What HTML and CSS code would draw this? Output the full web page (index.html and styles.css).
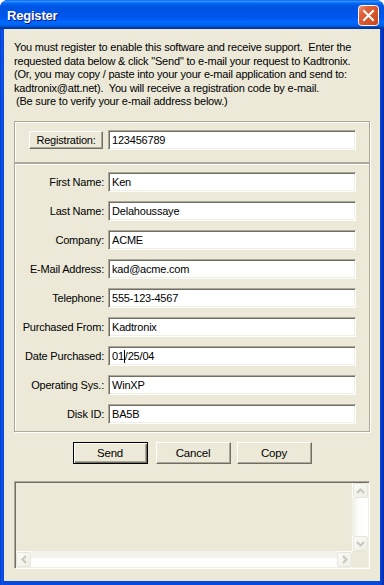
FILE: index.html
```html
<!DOCTYPE html>
<html lang="en">
<head>
  <meta charset="UTF-8" />
  <meta name="viewport" content="width=device-width, initial-scale=1.0" />
  <title>Register</title>
  <link rel="stylesheet" href="styles.css">
</head>
<body>
  <div class="window">
    <div class="titlebar">
      <span class="title">Register</span>
      <button class="close" aria-label="Close">
        <svg width="21" height="21" viewBox="0 0 21 21">
          <defs>
            <linearGradient id="closeBg" x1="0" y1="0" x2="1" y2="1">
              <stop offset="0" stop-color="#f0a58c"/>
              <stop offset="0.25" stop-color="#e2643c"/>
              <stop offset="1" stop-color="#c6441c"/>
            </linearGradient>
          </defs>
          <rect x="0.5" y="0.5" width="20" height="20" rx="3" fill="url(#closeBg)" stroke="#fff"/>
          <path d="M6 6 L15 15 M15 6 L6 15" stroke="#fff" stroke-width="2" stroke-linecap="square"/>
        </svg>
      </button>
    </div>

    <div class="client">
      <p class="intro">You must register to enable this software and receive support.&nbsp; Enter the<br>requested data below &amp; click "Send" to e-mail your request to Kadtronix.<br>(Or, you may copy / paste into your your e-mail application and send to:<br>kadtronix@att.net).&nbsp; You will receive a registration code by e-mail.</p>
      <p class="note">(Be sure to verify your e-mail address below.)</p>

      <!-- registration code -->
      <div class="group group-reg">
        <button class="btn btn-reg">Registration:</button>
        <input class="field" type="text" value="123456789">
      </div>

      <!-- user data -->
      <div class="group group-form">
        <label>First Name:</label><input class="field" type="text" value="Ken">
        <label>Last Name:</label><input class="field" type="text" value="Delahoussaye">
        <label>Company:</label><input class="field" type="text" value="ACME">
        <label>E-Mail Address:</label><input class="field" type="text" value="kad@acme.com">
        <label>Telephone:</label><input class="field" type="text" value="555-123-4567">
        <label>Purchased From:</label><input class="field" type="text" value="Kadtronix">
        <label>Date Purchased:</label><div class="field field-caret">01<span class="caret"></span>/25/04</div>
        <label>Operating Sys.:</label><input class="field" type="text" value="WinXP">
        <label>Disk ID:</label><input class="field" type="text" value="BA5B">
      </div>

      <div class="actions">
        <button class="btn btn-default">Send</button>
        <button class="btn btn-cancel">Cancel</button>
        <button class="btn">Copy</button>
      </div>

      <!-- output box -->
      <div class="log">
        <div class="log-body"></div>
        <div class="vscroll">
          <div class="sb-btn">
            <svg width="9" height="6" viewBox="0 0 9 6"><path d="M1 5 L4.5 1.5 L8 5" fill="none" stroke="#c9c7ba" stroke-width="2"/></svg>
          </div>
          <div class="sb-track sb-track-v"></div>
          <div class="sb-btn">
            <svg width="9" height="6" viewBox="0 0 9 6"><path d="M1 1 L4.5 4.5 L8 1" fill="none" stroke="#c9c7ba" stroke-width="2"/></svg>
          </div>
        </div>
        <div class="hscroll">
          <div class="sb-btn">
            <svg width="6" height="9" viewBox="0 0 6 9"><path d="M5 1 L1.5 4.5 L5 8" fill="none" stroke="#c9c7ba" stroke-width="2"/></svg>
          </div>
          <div class="sb-track sb-track-h"></div>
          <div class="sb-btn">
            <svg width="6" height="9" viewBox="0 0 6 9"><path d="M1 1 L4.5 4.5 L1 8" fill="none" stroke="#c9c7ba" stroke-width="2"/></svg>
          </div>
        </div>
        <div class="corner"></div>
      </div>
    </div>
  </div>
</body>
</html>
```

FILE: styles.css
```css
body {
  margin: 0;
  background: #fff;
  font-family: "Liberation Sans", Arial, sans-serif;
}

.window {
  width: 384px;
  height: 585px;
  display: flex;
  flex-direction: column;
  border-radius: 8px 8px 0 0;
  overflow: hidden;
  background: linear-gradient(to right, #0a3bcf 0, #0855e8 2px, #0749dc 4px, #0749dc 380px, #0636c4 382px, #0a2aa8 384px);
}

/* barra de titulo estilo XP */
.titlebar {
  height: 29px;
  flex-shrink: 0;
  display: flex;
  align-items: center;
  justify-content: space-between;
  padding: 0 5px 0 7px;
  box-sizing: border-box;
  background: linear-gradient(180deg, #0058ee 0%, #3a93ff 4%, #288eff 6%, #127dff 8%, #036ffc 10%, #0262ee 14%, #0057e5 20%, #0054e3 24%, #0055eb 56%, #005bf5 66%, #026afe 76%, #0062ef 86%, #0052d6 92%, #0040ab 94%, #003092 100%);
}

.title {
  color: #fff;
  font-weight: bold;
  font-size: 13px;
  letter-spacing: -0.2px;
  text-shadow: 1px 1px 0 #0a1883;
  margin-top: 1px;
}

.close {
  width: 21px;
  height: 21px;
  padding: 0;
  border: none;
  background: none;
  display: block;
  margin-top: 2px;
}

.close svg { display: block; }

.client {
  flex: 1;
  margin: 0 4px 4px 4px;
  background: #ece9d8;
  font-size: 11px;
  letter-spacing: -0.2px;
  color: #000;
}

.intro {
  margin: 12px 0 0 10px;
  line-height: 13.5px;
}

.note {
  margin: 0 0 12.5px 12px;
  line-height: 13.5px;
}

.group {
  margin: 0 10px;
  border: 1px solid #aca899;
  box-shadow: inset 1px 1px 0 #fff, 1px 1px 0 #fff;
  box-sizing: border-box;
}

.group-reg {
  height: 42px;
  display: flex;
  align-items: flex-start;
  padding: 8px 13px 0 14px;
}

.group-form {
  display: grid;
  grid-template-columns: 1fr 248px;
  column-gap: 4px;
  row-gap: 9px;
  padding: 8px 13px 7px 1px;
}

.group-form label {
  text-align: right;
  align-self: center;
}

.field {
  width: 248px;
  height: 20px;
  box-sizing: border-box;
  margin: 0;
  padding: 0 3px;
  font: inherit;
  letter-spacing: inherit;
  color: #000;
  background: #fff;
  border: 1px solid;
  border-color: #aca899 #fff #fff #aca899;
  box-shadow: inset 1px 1px 0 #716f64, inset -1px -1px 0 #f1efe2;
  outline: none;
}

.field-caret {
  display: flex;
  align-items: center;
}

.caret {
  display: inline-block;
  width: 1px;
  height: 13px;
  background: #000;
}

.btn {
  width: 75px;
  height: 22px;
  box-sizing: border-box;
  margin: 0;
  padding: 0;
  font: inherit;
  font-size: 11.5px;
  letter-spacing: inherit;
  color: #000;
  background: #ece9d8;
  border: 1px solid;
  border-color: #fff #716f64 #716f64 #fff;
  box-shadow: inset -1px -1px 0 #aca899;
}

.btn-reg {
  width: 74px;
  height: 18px;
  margin: 1px 5px 0 0;
  font-size: 11px;
}

.btn-default {
  border: 1px solid #000;
  box-shadow: inset 1px 1px 0 #fff, inset -1px -1px 0 #716f64, inset -2px -2px 0 #aca899;
}

.actions {
  display: flex;
  justify-content: center;
  gap: 8px;
  margin-top: 10px;
}

.btn-cancel { margin-right: -2px; }

.log {
  margin: 17px 10px 0;
  height: 88px;
  box-sizing: border-box;
  border: 1px solid;
  border-color: #aca899 #fff #fff #aca899;
  box-shadow: inset 1px 1px 0 #716f64, inset -1px -1px 0 #f1efe2;
  padding: 1px;
  display: grid;
  grid-template-columns: 1fr 16px;
  grid-template-rows: 1fr 16px;
}

.log-body { background: #ece9d8; }

.vscroll {
  display: flex;
  flex-direction: column;
  background: #fdfdfa;
}

.hscroll {
  display: flex;
  background: #fdfdfa;
}

.sb-btn {
  width: 15px;
  height: 15px;
  flex-shrink: 0;
  margin: 0 0 1px 0;
  box-sizing: border-box;
  border: 1px solid #e8e6dc;
  border-radius: 2px;
  background: linear-gradient(135deg, #fbfbf8, #eeede5);
  display: flex;
  align-items: center;
  justify-content: center;
}

.vscroll .sb-btn { margin: 0 0 0 1px; }
.hscroll .sb-btn { margin: 1px 0 0 0; }

.sb-track { flex: 1; }

.sb-track-v {
  background: linear-gradient(to right, #efeee6, #fdfdfb 40%, #fff);
}

.sb-track-h {
  background: linear-gradient(to bottom, #f3f2ec 0, #f3f2ec 40%, #fff 50%, #fff);
}

.corner { background: #ece9d8; }
```
